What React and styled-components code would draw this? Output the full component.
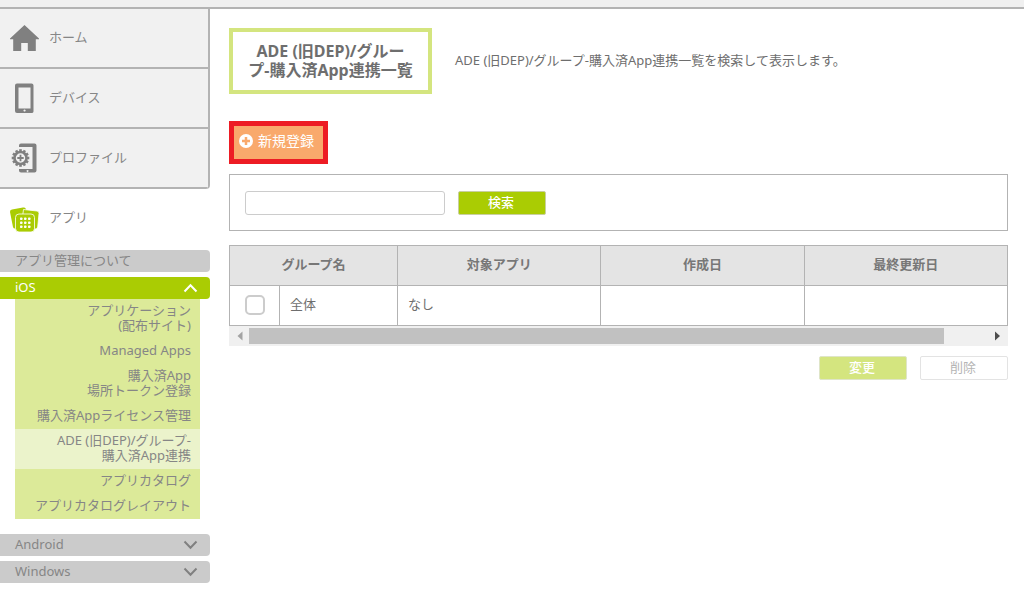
import React from 'react';
import styled, { createGlobalStyle } from 'styled-components';

const Global = createGlobalStyle`
  * { box-sizing: border-box; }
  body { margin: 0; background: #fff; color: #6e6e6e; font: 13px/20px "Noto Sans", "Noto Sans CJK JP", sans-serif; }
  button, input { font: inherit; }
  a { color: inherit; text-decoration: none; }
`;

const TopBar = styled.header`
  height: 9px;
  background: #f0f0f0;
  border-bottom: 2px solid #b3b3b3;
`;
const Layout = styled.div`
  display: flex;
  align-items: flex-start;
`;
const Sidebar = styled.aside`
  flex: 0 0 210px;
  padding-bottom: 11px;
`;
const NavGroup = styled.nav`
  display: flex;
  flex-direction: column;
  border-right: 2px solid #b3b3b3;
  border-bottom-right-radius: 4px;
  overflow: hidden;
`;
const NavItem = styled.a`
  display: flex;
  align-items: center;
  gap: 10px;
  height: 60px;
  padding-left: 9px;
  color: #868686;
  background: ${(p) => (p.$active ? '#fff' : '#f1f1f1')};
  border-bottom: 2px solid ${(p) => (p.$active ? 'transparent' : '#b3b3b3')};
  svg { flex: none; width: 30px; height: 32px; display: block; }
`;
const NavLabel = styled.span`
  padding-bottom: 2px;
`;
const Sections = styled.div`
  display: flex;
  flex-direction: column;
  gap: 5px;
  padding-top: 1px;
`;
const SectionBar = styled.button`
  display: flex;
  align-items: center;
  justify-content: space-between;
  width: 100%;
  height: 22px;
  padding: 0 12px 2px 15px;
  border: 0;
  border-radius: 0 4px 4px 0;
  color: ${(p) => (p.$open ? '#fff' : '#868686')};
  background: ${(p) => (p.$open ? '#aacc03' : '#cbcbcb')};
  svg { width: 15px; height: 10px; margin-top: 2px; display: block; }
`;
const SubMenu = styled.ul`
  list-style: none;
  margin: 0 10px 10px 15px;
  padding: 0;
  background: #dcea99;
`;
const SubLink = styled.a`
  display: block;
  padding: 4px 9px 6px;
  line-height: 15px;
  text-align: right;
  color: #868686;
  background: ${(p) => (p.$current ? '#ebf3cb' : 'transparent')};
`;

const Main = styled.main`
  flex: 1;
  min-width: 0;
  padding: 19px 16px 20px 19px;
`;
const Heading = styled.div`
  display: flex;
  align-items: center;
  gap: 23px;
  margin-bottom: 27px;
`;
const Title = styled.h1`
  flex: 0 0 203px;
  margin: 0;
  padding: 10px 12px;
  border: 4px solid #d4e57f;
  font-size: 16px;
  line-height: 19px;
  text-align: center;
`;
const Lead = styled.p`
  margin: 0;
  padding-bottom: 2px;
`;
const CreateButton = styled.button`
  display: flex;
  align-items: center;
  gap: 5px;
  height: 43px;
  padding: 0 9px 4px 5px;
  border: 5px solid #ed1c24;
  background: #f9a96c;
  color: #fff;
  font-size: 14px;
  svg { width: 14px; height: 14px; display: block; }
`;
const SearchPanel = styled.form`
  display: flex;
  align-items: center;
  gap: 13px;
  height: 57px;
  margin: 10px 0 14px;
  padding: 0 15px;
  border: 1px solid #b3b3b3;
`;
const SearchInput = styled.input`
  width: 200px;
  height: 24px;
  padding: 0 6px;
  border: 1px solid #ccc;
  border-radius: 3px;
  color: inherit;
  outline: none;
`;
const tones = {
  green: ['#aacc03', '#c8cfa0', '#fff'],
  pale: ['#d4e57f', '#dfe5c8', '#fff'],
  plain: ['#fff', '#e3e3e3', '#b5b5b5'],
};
const ActionButton = styled.button`
  width: 88px;
  height: 24px;
  padding: 0 2px 2px 0;
  border: 1px solid ${(p) => tones[p.$tone][1]};
  border-radius: 2px;
  background: ${(p) => tones[p.$tone][0]};
  color: ${(p) => tones[p.$tone][2]};
  font-weight: ${(p) => (p.$tone === 'plain' ? 400 : 500)};
  line-height: 20px;
`;
const Table = styled.table`
  width: 100%;
  table-layout: fixed;
  border-collapse: collapse;
  th, td { height: 40px; border: 1px solid #b3b3b3; padding: 0 10px 3px; }
  th { background: #e4e4e4; color: #777; }
`;
const CheckColumn = styled.col`
  width: 50px;
`;
const NameColumn = styled.col`
  width: 118px;
`;
const Check = styled.input`
  appearance: none;
  display: block;
  width: 20px;
  height: 20px;
  margin: 2px auto 0;
  border: 2px solid #ccc;
  border-radius: 5px;
  background: #fff;
`;
const ScrollBar = styled.div`
  display: flex;
  height: 20px;
  background: #f0f0f0;
`;
const ScrollArrow = styled.button`
  flex: 0 0 20px;
  padding: 0;
  border: 0;
  background: transparent;
  color: ${(p) => (p.$disabled ? '#a3a3a3' : '#4d4d4d')};
  svg { display: block; width: 20px; height: 20px; }
`;
const Track = styled.div`
  flex: 1;
  padding: 2px 0;
`;
const Thumb = styled.div`
  width: 94%;
  height: 100%;
  background: #c1c1c1;
`;
const Actions = styled.div`
  display: flex;
  justify-content: flex-end;
  gap: 13px;
  margin-top: 10px;
`;

const HomeIcon = () => (
  <svg viewBox="0 0 30 32" fill="#808080"><path d="M15.500 3 30 16.500v.8h-3.200V29h-8v-8h-6.600v8H4.200V17.300H1v-.8z" /></svg>
);
const DeviceIcon = () => (
  <svg viewBox="0 0 30 32" fill="#808080" fillRule="evenodd"><path d="M8 1.500h14.500q2 0 2 2v26q0 1.500-2 1.500H8q-2 0-2-2v-25.500q0-2 2-2zM9.500 5.500V26.500h12V5.500zM15.500 27.400a1.100 1.100 0 1 0 .1 0z" /></svg>
);
const teeth = Array.from({ length: 12 }, (_, i) => i * 30);
const ProfileIcon = () => (
  <svg viewBox="0 0 30 32" fill="#808080">
    <path fillRule="evenodd" d="M12 1.500h13.500q2 0 2 2v25q0 2-2 2H12q-2 0-2-2V27h13.500V5H10V3.500q0-2 2-2zM18.500 27.900a1 1 0 1 0 .1 0z" />
    <circle cx="11.500" cy="16" r="6" fill="none" stroke="#808080" strokeWidth="2.600" />
    {teeth.map((a) => <rect key={a} x="10.200" y="7.200" width="2.600" height="2.500" transform={`rotate(${a} 11.500 16)`} />)}
    <path d="M10.600 12.800h1.800v2.300h2.300v1.800h-2.300v2.300h-1.800v-2.300H8.300v-1.800h2.300z" />
  </svg>
);
const AppsIcon = () => (
  <svg viewBox="0 0 30 32" fill="#aacc03">
    <path d="M3 7.500 14 5.500q2-.3 2.800 1.200l3 16-13.300 3.800q-2 .3-2.500-1.500L1 10q-.2-2.200 2-2.500z" />
    <path d="M14.500 7.500 28 9q2.200.3 2 2.500L28.700 25q-.4 2.300-2.700 2L12.500 23z" stroke="#fff" strokeWidth=".8" />
    <rect x="6.500" y="12" width="19" height="18" rx="3.500" stroke="#fff" strokeWidth=".8" />
    {[15.5, 19.5, 23.5].map((y) => [11, 15, 19].map((x) => <rect key={`${x}-${y}`} x={x} y={y} width="2.500" height="2.500" rx=".8" fill="#fff" />))}
  </svg>
);
const Chevron = ({ up }) => (
  <svg viewBox="0 0 15 10" fill="none" stroke={up ? '#fff' : '#808080'} strokeWidth="2"><path d={up ? 'M1.500 8.500 7.500 2.300 13.500 8.500' : 'M1.500 1.500 7.500 7.700 13.500 1.500'} /></svg>
);
const PlusIcon = () => (
  <svg viewBox="0 0 14 14"><circle cx="7" cy="7" r="7" fill="#fff" /><path d="M7 3v8M3 7h8" stroke="#f9a96c" strokeWidth="2.500" /></svg>
);

const submenu = [
  ['アプリケーション', '(配布サイト)'],
  ['Managed Apps'],
  ['購入済App', '場所トークン登録'],
  ['購入済Appライセンス管理'],
  ['ADE (旧DEP)/グループ-', '購入済App連携'],
  ['アプリカタログ'],
  ['アプリカタログレイアウト'],
];

export default function App() {
  return (
    <>
      <Global />
      <TopBar />
      <Layout>
        <Sidebar>
          <NavGroup>
            <NavItem href="#home"><HomeIcon /><NavLabel>ホーム</NavLabel></NavItem>
            <NavItem href="#device"><DeviceIcon /><NavLabel>デバイス</NavLabel></NavItem>
            <NavItem href="#profile"><ProfileIcon /><NavLabel>プロファイル</NavLabel></NavItem>
          </NavGroup>
          <NavItem href="#apps" $active><AppsIcon /><NavLabel>アプリ</NavLabel></NavItem>
          <Sections>
            <SectionBar type="button">アプリ管理について</SectionBar>
            <div>
              <SectionBar type="button" $open aria-expanded="true">iOS<Chevron up /></SectionBar>
              <SubMenu>
                {submenu.map((lines, i) => (
                  <li key={lines[0]}>
                    <SubLink href="#ios" $current={i === 4}>
                      {lines[0]}{lines[1] && <><br />{lines[1]}</>}
                    </SubLink>
                  </li>
                ))}
              </SubMenu>
            </div>
            <SectionBar type="button" aria-expanded="false">Android<Chevron /></SectionBar>
            <SectionBar type="button" aria-expanded="false">Windows<Chevron /></SectionBar>
          </Sections>
        </Sidebar>
        <Main>
          <Heading>
            <Title>ADE (旧DEP)/グルー<br />プ-購入済App連携一覧</Title>
            <Lead>ADE (旧DEP)/グループ-購入済App連携一覧を検索して表示します。</Lead>
          </Heading>
          <CreateButton type="button"><PlusIcon />新規登録</CreateButton>
          <SearchPanel onSubmit={(e) => e.preventDefault()}>
            <SearchInput type="text" aria-label="検索" />
            <ActionButton $tone="green">検索</ActionButton>
          </SearchPanel>
          <Table>
            <colgroup><CheckColumn /><NameColumn /><col /><col /><col /></colgroup>
            <thead>
              <tr><th colSpan={2}>グループ名</th><th>対象アプリ</th><th>作成日</th><th>最終更新日</th></tr>
            </thead>
            <tbody>
              <tr>
                <td><Check type="checkbox" aria-label="全体" /></td>
                <td>全体</td><td>なし</td><td /><td />
              </tr>
            </tbody>
          </Table>
          <ScrollBar>
            <ScrollArrow type="button" $disabled aria-label="左へ"><svg viewBox="0 0 20 20" fill="currentColor"><path d="M13.500 5.500v9L8.500 10z" /></svg></ScrollArrow>
            <Track><Thumb /></Track>
            <ScrollArrow type="button" aria-label="右へ"><svg viewBox="0 0 20 20" fill="currentColor"><path d="M7 5.500v9l5-4.500z" /></svg></ScrollArrow>
          </ScrollBar>
          <Actions>
            <ActionButton type="button" $tone="pale">変更</ActionButton>
            <ActionButton type="button" $tone="plain">削除</ActionButton>
          </Actions>
        </Main>
      </Layout>
    </>
  );
}
